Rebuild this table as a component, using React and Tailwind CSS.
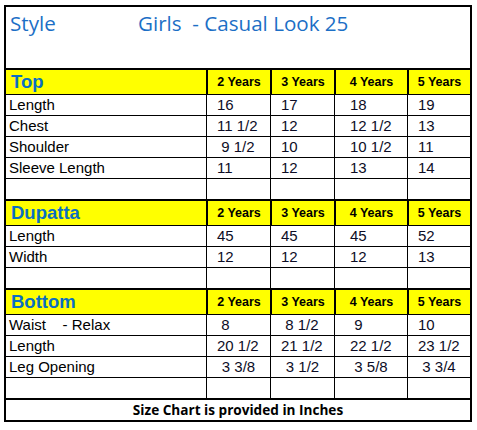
import React from 'react';

const YEARS = ['2 Years', '3 Years', '4 Years', '5 Years'];

const SECTIONS = [
  {
    name: 'Top',
    rows: [
      { label: 'Length', values: ['16', '17', '18', '19'] },
      { label: 'Chest', values: ['11 1/2', '12', '12 1/2', '13'] },
      { label: 'Shoulder', values: [' 9 1/2', '10', '10 1/2', '11'] },
      { label: 'Sleeve Length', values: ['11', '12', '13', '14'] },
      { label: '', values: ['', '', '', ''] },
    ],
  },
  {
    name: 'Dupatta',
    rows: [
      { label: 'Length', values: ['45', '45', '45', '52'] },
      { label: 'Width', values: ['12', '12', '12', '13'] },
      { label: '', values: ['', '', '', ''] },
    ],
  },
  {
    name: 'Bottom',
    rows: [
      { label: 'Waist    - Relax', values: [' 8', ' 8 1/2', ' 9', '10'] },
      { label: 'Length', values: ['20 1/2', '21 1/2', '22 1/2', '23 1/2'] },
      { label: 'Leg Opening', values: ['3 3/8', '3 1/2', '3 5/8', '3 3/4'], center: true },
      { label: '', values: ['', '', '', ''] },
    ],
  },
];

// left padding of each value column
const PAD = ['pl-[10px]', 'pl-[10px]', 'pl-[15px]', 'pl-[10px]'];

const GRID = 'grid grid-cols-[200px_64px_64px_73px_63px]';

const SectionHeader = ({ name }) => (
  <div className={`${GRID} h-[26px] border-t-2 border-black bg-[#ffff00]`}>
    <div className="pl-[5px] text-[18.5px] font-bold leading-[24px] text-[#0a6fc2]">{name}</div>
    {YEARS.map((y) => (
      <div
        key={y}
        className="border-l-2 border-black text-center text-[12.5px] font-bold leading-[24px] text-black"
      >
        {y}
      </div>
    ))}
  </div>
);

const DataRow = ({ row }) => (
  <div className={`${GRID} h-[21px] border-t border-black`}>
    <div className="whitespace-pre pl-[3px] text-[15px] leading-[20px] text-black">{row.label}</div>
    {row.values.map((v, i) => (
      <div
        key={i}
        className={`whitespace-pre border-l border-black text-[15px] leading-[20px] text-[#0d0d26] ${
          row.center ? 'text-center' : PAD[i]
        }`}
      >
        {v}
      </div>
    ))}
  </div>
);

const App = () => {
  return (
    <div className="h-[430px] w-[477px] bg-white pl-[4px] pt-[5px] font-['Liberation_Sans',Arial,sans-serif]">
      <div className="w-[468px] border-2 border-black">
        <div className="flex h-[61px] pl-[4px] pt-[2px] font-['Open_Sans',sans-serif] text-[20.6px] leading-[28px] text-[#1c6fc6]">
          <span className="w-[128px]">Style</span>
          <span className="whitespace-pre">Girls  - Casual Look 25</span>
        </div>

        {SECTIONS.map((s) => (
          <React.Fragment key={s.name}>
            <SectionHeader name={s.name} />
            {s.rows.map((r, i) => (
              <DataRow key={i} row={r} />
            ))}
          </React.Fragment>
        ))}

        <div className="h-[22px] border-t-2 border-black text-center font-['Open_Sans',sans-serif] text-[13.6px] font-bold leading-[20px] text-black">
          Size Chart is provided in Inches
        </div>
      </div>
    </div>
  );
};

export default App;
